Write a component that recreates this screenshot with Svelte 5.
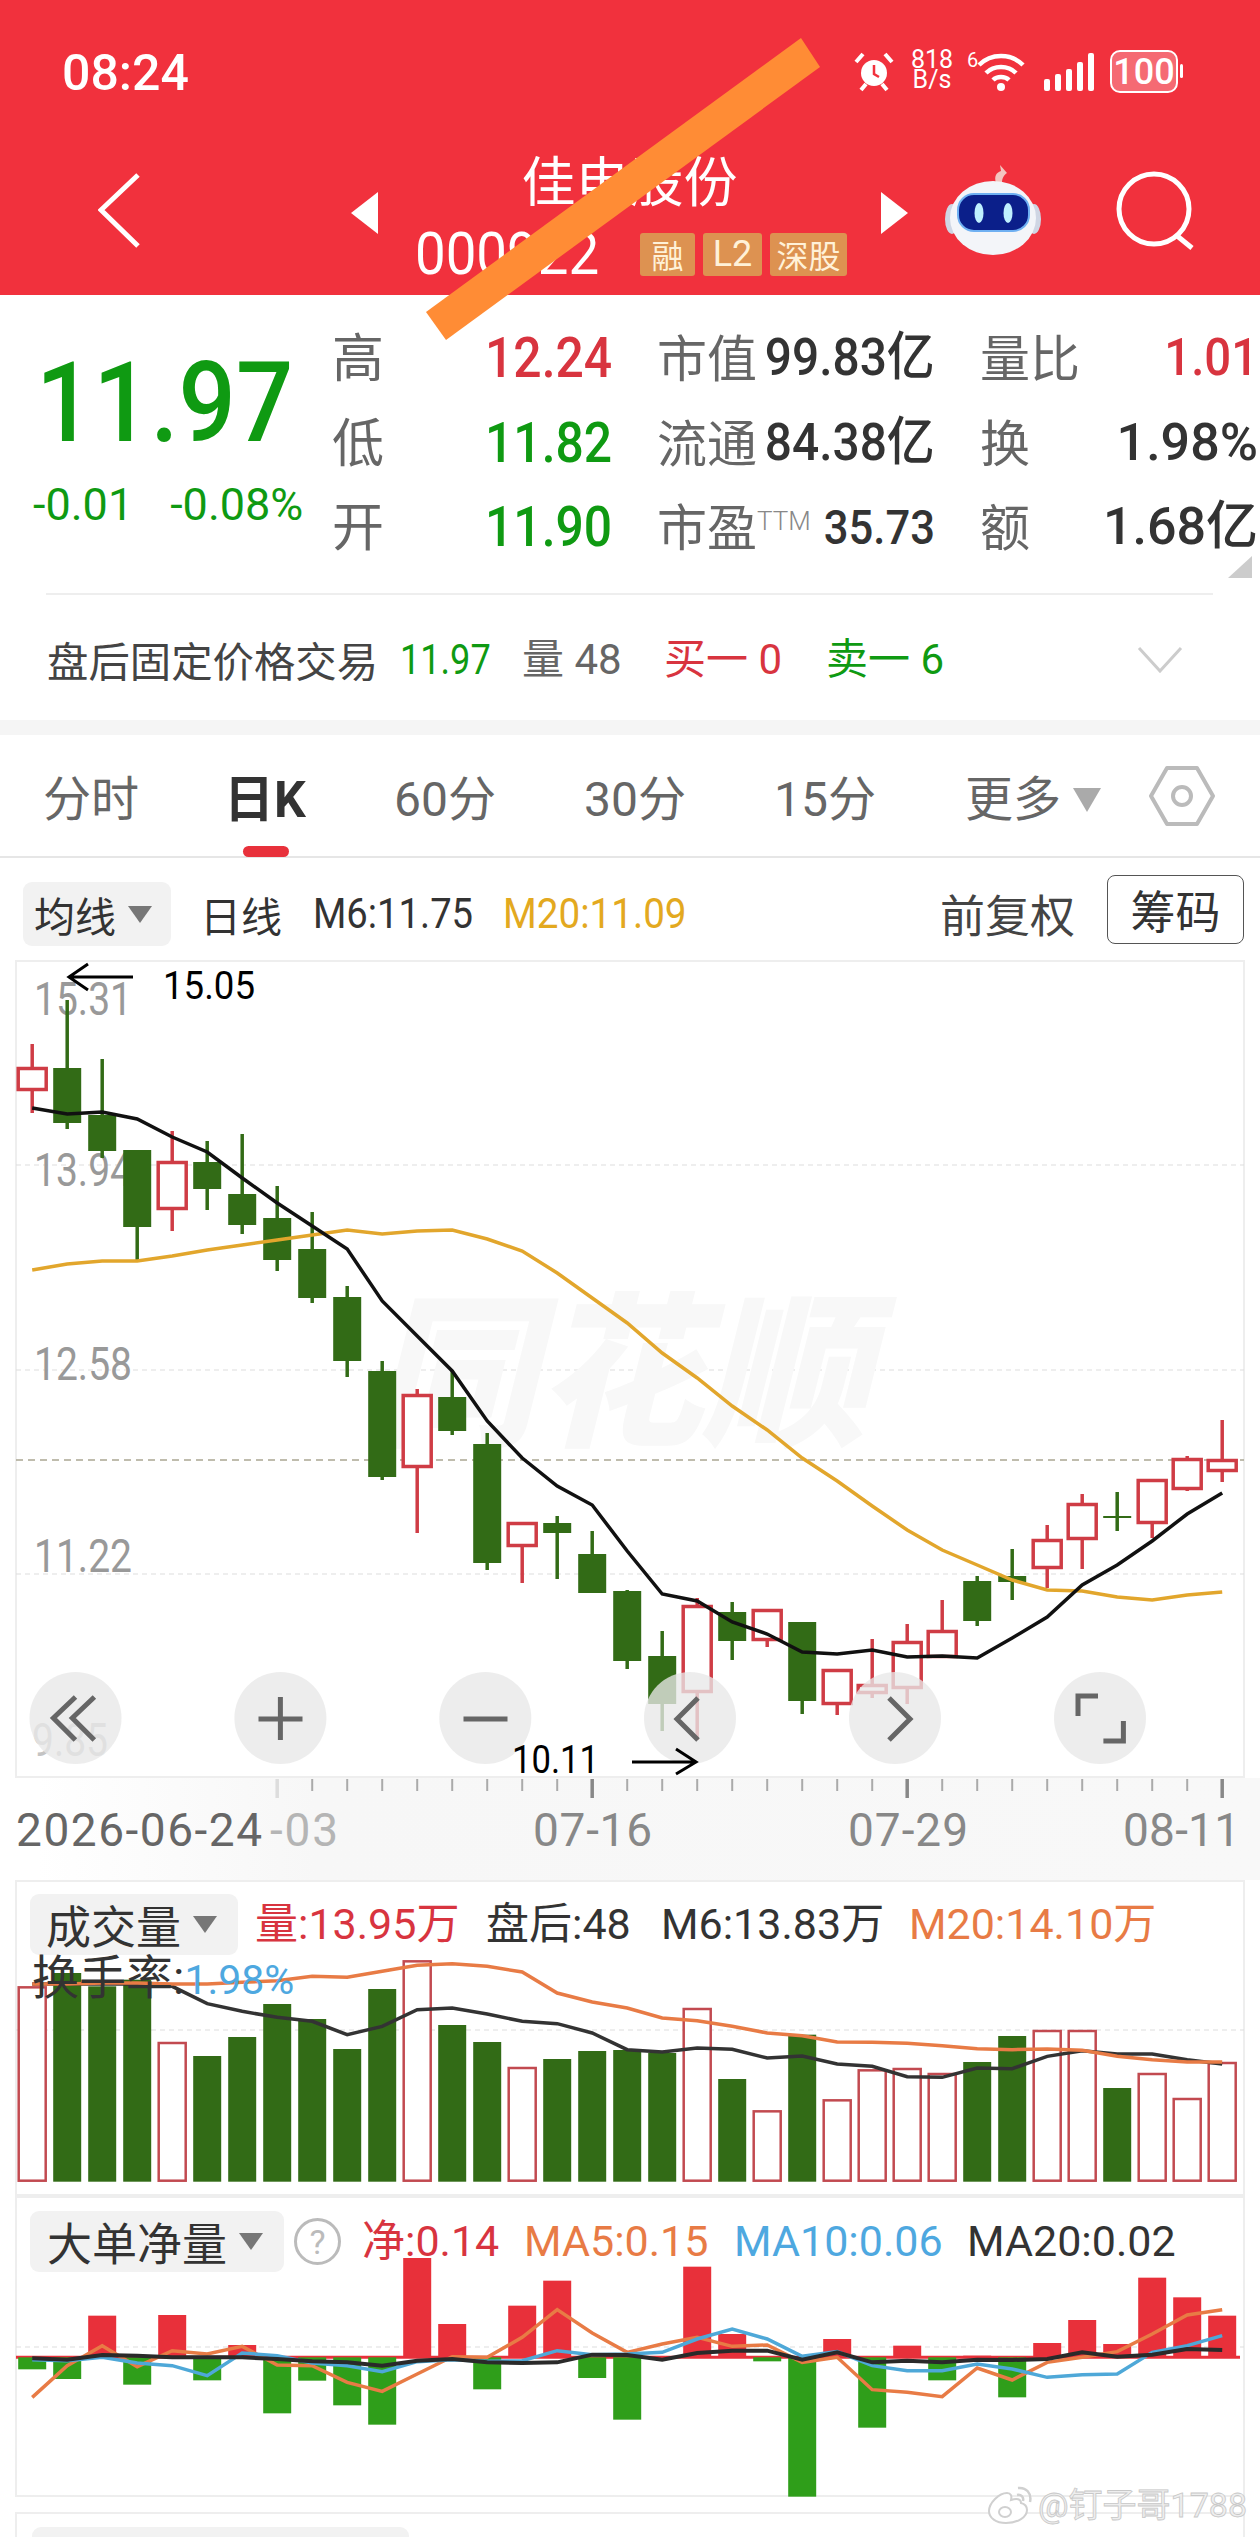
<script lang="ts">
	const xAt = (i: number) => 32.2 + 35 * i;

	// [rising, wickTop, bodyTop, bodyBottom, wickBottom]
	const candles: [boolean, number, number, number, number][] = [
		[true, 1046, 1069, 1093, 1115],
		[false, 1002, 1070, 1125, 1131],
		[false, 1061, 1117, 1153, 1160],
		[false, 1152, 1152, 1229, 1262],
		[true, 1133, 1163, 1212, 1233],
		[false, 1143, 1164, 1191, 1212],
		[false, 1136, 1196, 1227, 1236],
		[false, 1188, 1220, 1262, 1273],
		[false, 1214, 1251, 1300, 1305],
		[false, 1288, 1299, 1363, 1379],
		[false, 1363, 1373, 1479, 1482],
		[true, 1391, 1396, 1470, 1535],
		[false, 1372, 1399, 1433, 1437],
		[false, 1435, 1446, 1565, 1572],
		[true, 1524, 1524, 1549, 1585],
		[false, 1518, 1525, 1535, 1581],
		[false, 1533, 1556, 1595, 1595],
		[false, 1592, 1593, 1663, 1671],
		[false, 1633, 1658, 1706, 1733],
		[true, 1600, 1607, 1695, 1742],
		[false, 1604, 1614, 1643, 1662],
		[true, 1611, 1611, 1643, 1649],
		[false, 1624, 1624, 1703, 1716],
		[true, 1671, 1671, 1707, 1717],
		[true, 1641, 1686, 1696, 1700],
		[true, 1626, 1643, 1691, 1706],
		[true, 1602, 1632, 1660, 1660],
		[false, 1578, 1583, 1623, 1628],
		[false, 1551, 1578, 1584, 1602],
		[true, 1527, 1541, 1571, 1590],
		[true, 1496, 1505, 1542, 1571],
		[false, 1494, 1518, 1520, 1533],
		[true, 1481, 1481, 1526, 1540],
		[true, 1458, 1460, 1492, 1493],
		[true, 1422, 1461, 1474, 1484]
	];
	const ma6 = [
		1110, 1116, 1114, 1121, 1139, 1154, 1180, 1205, 1228, 1251, 1303, 1338, 1373, 1423, 1460, 1488,
		1507, 1553, 1596, 1603, 1624, 1636, 1654, 1656, 1652, 1659, 1658, 1660, 1640, 1619, 1587, 1567,
		1543, 1516, 1495
	];
	const ma20 = [
		1272, 1266, 1263, 1263, 1258, 1252, 1247, 1242, 1237, 1232, 1236, 1233, 1232, 1241, 1253, 1275,
		1300, 1325, 1355, 1380, 1408, 1432, 1460, 1483, 1508, 1532, 1552, 1567, 1582, 1592, 1593, 1599,
		1602, 1597, 1594
	];
	const priceLabels = [
		{ text: '15.31', y: 1017 },
		{ text: '13.94', y: 1188 },
		{ text: '12.58', y: 1381.5 },
		{ text: '11.22', y: 1574 }
	];
	const grid = [1167, 1372, 1576];

	// volume panel, bar tops in page px
	const volTop = (z: number) => 1860 + z / 3;
	const volume: [boolean, number][] = (
		[
			[true, 388], [false, 345], [false, 385], [false, 365], [true, 555], [false, 594], [false, 537],
			[false, 438], [false, 483], [false, 573], [false, 393], [true, 310], [false, 501], [false, 552],
			[true, 630], [false, 603], [false, 579], [false, 576], [false, 585], [true, 453], [false, 663],
			[true, 760], [false, 530], [true, 727], [true, 637], [true, 633], [true, 648], [false, 612],
			[false, 534], [true, 519], [true, 519], [false, 690], [true, 648], [true, 723], [true, 615]
		] as [boolean, number][]
	).map(([up, z]) => [up, volTop(z)]);
	const volBase = 2182.7;
	const volM20 = [
		378, 378, 375, 375, 378, 378, 373, 368, 355, 358, 340, 322, 317, 325, 342, 405, 432, 450, 480, 488,
		505, 525, 533, 552, 553, 556, 563, 572, 575, 573, 577, 595, 605, 612, 612
	].map(volTop);
	const volM6 = [
		378, 378, 378, 378, 385, 437, 460, 478, 490, 530, 505, 455, 450, 468, 490, 497, 525, 575, 582, 570,
		574, 600, 594, 618, 625, 656, 658, 630, 632, 595, 578, 588, 588, 605, 618
	].map(volTop);

	// net flow panel, z values read against a zero line at 505
	const netY = (z: number) => 2190 + z / 3;
	const netZero = 505;
	const net = [
		541, 570, 380, 587, 378, 574, 468, 673, 575, 649, 707, 207, 405, 601, 350, 275, 567, 692, 505, 233,
		435, 517, 923, 450, 716, 470, 574, 500, 625, 462, 393, 465, 266, 325, 380
	];
	const netMa5 = [
		625, 530, 470, 533, 485, 495, 472, 528, 530, 580, 607, 555, 503, 505, 445, 362, 432, 490, 465, 445,
		472, 468, 520, 505, 602, 610, 623, 537, 573, 520, 505, 488, 435, 378, 362
	];
	const netMa10 = [
		512, 515, 505, 522, 530, 560, 492, 500, 522, 530, 548, 518, 512, 517, 515, 485, 497, 495, 490, 450,
		420, 450, 502, 488, 530, 545, 545, 525, 540, 565, 557, 555, 490, 470, 440
	];
	const netMa20 = [
		508, 512, 498, 500, 505, 505, 505, 510, 517, 520, 530, 515, 510, 520, 522, 520, 497, 498, 512, 492,
		485, 485, 512, 490, 520, 515, 520, 512, 513, 510, 490, 503, 497, 480, 483
	];

	const line = (ys: number[]) => ys.map((y, i) => `${xAt(i)},${y}`).join(' ');
	const indices = candles.map((_, i) => i);
</script>

<div class="page">
	<header class="top">
		<div class="status">
			<span class="time">08:24</span>
			<div class="status-icons">
				<svg class="alarm" viewBox="0 0 40 40" aria-hidden="true">
					<circle cx="20" cy="21" r="13" fill="#fff" />
					<path d="M20 13v9l5 3" fill="none" stroke="#f1313d" stroke-width="2.5" />
					<path d="M2 10 9 2M38 10 31 2M7 38l5-6M33 38l-5-6" stroke="#fff" stroke-width="4" fill="none" />
				</svg>
				<span class="speed">818<br />B/s</span>
				<svg class="wifi" viewBox="0 0 58 40" aria-hidden="true">
					<text x="0" y="15" class="wifi-six">6</text>
					<path d="M12 13C24 1 44 1 56 13M19 21c8-8 22-8 30 0M26 28c4-4 12-4 16 0" fill="none" stroke="#fff" stroke-width="4.5" />
					<circle cx="34" cy="35" r="4" fill="#fff" />
				</svg>
				<svg class="signal" viewBox="0 0 51 38" aria-hidden="true">
					<rect x="0" y="26" width="6" height="12" rx="2" fill="#fff" />
					<rect x="11" y="21" width="6" height="17" rx="2" fill="#fff" />
					<rect x="22" y="16" width="6" height="22" rx="2" fill="#fff" />
					<rect x="33" y="9" width="6" height="29" rx="2" fill="#fff" />
					<rect x="44" y="0" width="6" height="38" rx="2" fill="#fff" />
				</svg>
				<div class="battery"><span>100</span></div>
			</div>
		</div>
		<div class="nav">
			<svg class="back" viewBox="0 0 42 75" aria-hidden="true">
				<path d="M40 2 3 37l37 36" fill="none" stroke="#fff" stroke-width="5" />
			</svg>
			<div class="tri tri-left"></div>
			<div class="stock">
				<div class="stock-name">佳电股份</div>
				<div class="stock-code">
					<span class="code"><span class="sq sq-91">000922</span></span>
					<span class="tag">融</span>
					<span class="tag tag-l2">L2</span>
					<span class="tag tag-wide">深股</span>
				</div>
			</div>
			<div class="tri tri-right"></div>
			<svg class="robot" viewBox="0 0 98 92" aria-hidden="true">
				<path d="M52 20c-2-7 0-10 5-12l-1-6 7 8c-3 2-5 5-5 10z" fill="#f3c6c0" />
				<ellipse cx="8" cy="56" rx="7" ry="15" fill="#cfd6e4" />
				<ellipse cx="90" cy="56" rx="7" ry="15" fill="#cfd6e4" />
				<ellipse cx="49" cy="55" rx="43" ry="37" fill="#f3f5f9" />
				<rect x="14" y="31" width="71" height="37" rx="16" fill="#0b1f8a" stroke="#6fb0f2" stroke-width="2" />
				<ellipse cx="35" cy="50" rx="4.5" ry="10" fill="#bff0ff" />
				<ellipse cx="64" cy="50" rx="4.5" ry="10" fill="#bff0ff" />
			</svg>
			<svg class="search" viewBox="0 0 78 80" aria-hidden="true">
				<circle cx="38" cy="38" r="35" fill="none" stroke="#fff" stroke-width="5" />
				<path d="M60 64l16 13" stroke="#fff" stroke-width="5" fill="none" />
			</svg>
		</div>
	</header>

	<section class="quote">
		<div class="last">
			<div class="last-price"><span class="sq sq-90">11.97</span></div>
			<div class="last-change"><span>-0.01</span><span>-0.08%</span></div>
		</div>
		<div class="stats">
			<span class="stat-key">高</span>
			<span class="stat-num red"><span class="sq sq-89">12.24</span></span>
			<div class="pair mid"><span class="pair-key">市值</span><span class="pair-val sq-r sq-92">99.83亿</span></div>
			<div class="pair end"><span class="pair-key">量比</span><span class="pair-val sq-r sq-91 red">1.01</span></div>

			<span class="stat-key">低</span>
			<span class="stat-num green"><span class="sq sq-89">11.82</span></span>
			<div class="pair mid"><span class="pair-key">流通</span><span class="pair-val sq-r sq-92">84.38亿</span></div>
			<div class="pair end"><span class="pair-key">换</span><span class="pair-val sq-r">1.98%</span></div>

			<span class="stat-key">开</span>
			<span class="stat-num green"><span class="sq sq-89">11.90</span></span>
			<div class="pair mid">
				<span class="pair-key">市盈<small>TTM</small></span><span class="pair-val pe sq-r sq-89">35.73</span>
			</div>
			<div class="pair end"><span class="pair-key">额</span><span class="pair-val sq-r">1.68亿</span></div>
		</div>
		<div class="corner"></div>
	</section>
	<div class="rule"></div>

	<div class="after">
		<span class="after-title">盘后固定价格交易</span>
		<span class="after-num green"><span class="sq sq-86">11.97</span></span>
		<span class="after-num muted">量 48</span>
		<span class="after-num red">买一 0</span>
		<span class="after-num green">卖一 6</span>
		<svg class="after-more" viewBox="0 0 46 27" aria-hidden="true">
			<path d="M2 2l21 23L44 2" fill="none" stroke="#ccc" stroke-width="3" />
		</svg>
	</div>
	<div class="band"></div>

	<nav class="tabs">
		<span>分时</span>
		<span class="active">日K</span>
		<span>60分</span>
		<span>30分</span>
		<span>15分</span>
		<span class="more">更多<i class="caret caret-lg"></i></span>
		<svg class="hex" viewBox="0 0 66 62" aria-hidden="true">
			<path d="M18 3h30l16 28-16 28H18L2 31z" fill="none" stroke="#bbb" stroke-width="4" stroke-linejoin="round" />
			<circle cx="33" cy="31" r="9" fill="none" stroke="#bbb" stroke-width="4" />
		</svg>
		<div class="pill"></div>
	</nav>

	<div class="controls">
		<button class="select select-ma">均线<i class="caret"></i></button>
		<span class="ctl-cjk">日线</span>
		<span class="ctl-num"><span class="sq sq-91">M6:11.75</span></span>
		<span class="ctl-num ctl-m20"><span class="sq sq-92">M20:11.09</span></span>
		<span class="ctl-adj">前复权</span>
		<button class="chips">筹码</button>
	</div>

	<div class="panel panel-price">
		<svg viewBox="15 962 1230 818" width="1230" height="818">
			<rect x="16" y="963" width="1228" height="816" class="frame" />
			{#each grid as y}
				<line x1="16" x2="1244" y1={y} y2={y} class="grid" />
			{/each}
			<line x1="16" x2="1244" y1="1462" y2="1462" class="grid-now" />
			<text x="370" y="1435" class="mark">同花顺</text>
			{#each priceLabels as l}
				<text x="34" y={l.y} class="axis-num" textLength="98" lengthAdjust="spacingAndGlyphs">{l.text}</text>
			{/each}
			<text x="32" y="1758" class="axis-num faded" textLength="76" lengthAdjust="spacingAndGlyphs">9.85</text>
			{#each candles as [up, wt, bt, bb, wb], i}
				<line x1={xAt(i)} x2={xAt(i)} y1={wt} y2={wb} class={up ? 'wick up' : 'wick down'} />
				{#if up}
					<rect x={xAt(i) - 14} y={bt + 1.5} width="28" height={bb - bt - 3} class="body-up" />
				{:else}
					<rect x={xAt(i) - 14} y={bt} width="28" height={Math.max(bb - bt, 2)} class="body-down" />
				{/if}
			{/each}
			<polyline points={line(ma20)} class="ma-yellow" />
			<polyline points={line(ma6)} class="ma-black" />

			{#each [75.5, 280.4, 485.3, 690, 895, 1100] as cx}
				<circle {cx} cy="1720" r="46" class="round" />
			{/each}
			<g class="round-icon">
				<path d="M75.5 1699 53.4 1720l22 22M94.4 1699 72.3 1720l22 22" />
				<path d="M280.4 1699v43M258.5 1721h44" />
				<path d="M463.5 1721h44" />
				<path d="M698 1700l-21 21 21 21" />
				<path d="M889 1700l21 21-21 21" />
				<path d="M1078 1718v-20h20M1123.4 1723v20h-20" />
			</g>

			<path d="M133 979H69m19-13-19 13 19 13" class="note" />
			<text x="163" y="1001" class="note-text" textLength="92" lengthAdjust="spacingAndGlyphs">15.05</text>
			<text x="512" y="1775" class="note-text" textLength="87" lengthAdjust="spacingAndGlyphs">10.11</text>
			<path d="M632 1764h64m-20-13 20 13-20 12" class="note" />
		</svg>
	</div>

	<div class="axis">
		<svg viewBox="15 1780 1230 102" width="1230" height="102">
			{#each indices.slice(8) as i}
				{#if i !== 16 && i !== 25 && i !== 34}
					<line x1={xAt(i)} x2={xAt(i)} y1="1781" y2="1793" class="tick" />
				{/if}
			{/each}
			<line x1={xAt(7)} x2={xAt(7)} y1="1781" y2="1800" class="tick-big tick-light" />
			<line x1={xAt(16)} x2={xAt(16)} y1="1781" y2="1800" class="tick-big" />
			<line x1={xAt(25)} x2={xAt(25)} y1="1781" y2="1800" class="tick-big" />
			<line x1={xAt(34)} x2={xAt(34)} y1="1781" y2="1800" class="tick-big" />
			<text x="16" y="1848" class="date date-dark" textLength="246">2026-06-24</text>
			<text x="270" y="1848" class="date date-light" textLength="68">-03</text>
			<text x="533" y="1848" class="date" textLength="119">07-16</text>
			<text x="848" y="1848" class="date" textLength="120">07-29</text>
			<text x="1123" y="1848" class="date" textLength="117">08-11</text>
		</svg>
	</div>

	<div class="panel panel-vol">
		<svg viewBox="15 1882 1230 316" width="1230" height="316">
			<rect x="16" y="1883" width="1228" height="314" class="frame" />
			<line x1="16" x2="1244" y1="2032" y2="2032" class="grid" />
			{#each volume as [up, top], i}
				{#if up}
					<rect x={xAt(i) - 13.5} y={top} width="27" height={volBase - top} class="vol-up" />
				{:else}
					<rect x={xAt(i) - 14} y={top} width="28" height={volBase - top + 1} class="body-down" />
				{/if}
			{/each}
			<polyline points={line(volM6)} class="vol-m6" />
			<polyline points={line(volM20)} class="vol-m20" />
		</svg>
		<div class="legend legend-vol">
			<button class="select select-vol">成交量<i class="caret"></i></button>
			<span class="red">量:13.95万</span>
			<span class="dark">盘后:48</span>
			<span class="dark">M6:13.83万</span>
			<span class="orange">M20:14.10万</span>
		</div>
		<div class="turnover">换手率:<span class="blue">1.98%</span></div>
	</div>

	<div class="panel panel-net">
		<svg viewBox="15 2197 1230 301" width="1230" height="301">
			<rect x="16" y="2198" width="1228" height="299" class="frame" />
			<line x1="16" x2="1244" y1="2348" y2="2348" class="grid" />
			<line x1="16" x2="1240" y1={netY(netZero)} y2={netY(netZero)} class="net-zero" />
			{#each net as z, i}
				{#if z < netZero}
					<rect x={xAt(i) - 14} y={netY(z)} width="28" height={netY(netZero) - netY(z)} class="net-up" />
				{:else if z > netZero}
					<rect x={xAt(i) - 14} y={netY(netZero)} width="28" height={netY(z) - netY(netZero)} class="net-down" />
				{/if}
			{/each}
			<polyline points={line(netMa5.map(netY))} class="net-ma5" />
			<polyline points={line(netMa10.map(netY))} class="net-ma10" />
			<polyline points={line(netMa20.map(netY))} class="net-ma20" />
		</svg>
		<div class="legend legend-net">
			<button class="select select-net">大单净量<i class="caret"></i></button>
			<span class="help">?</span>
			<span class="red">净:0.14</span>
			<span class="orange">MA5:0.15</span>
			<span class="blue">MA10:0.06</span>
			<span class="dark">MA20:0.02</span>
		</div>
	</div>

	<div class="panel-next"><div class="next-select"></div></div>

	<!-- editing marks and the repost credit sit on top of the screenshot -->
	<svg class="slash" viewBox="0 0 1260 360" aria-hidden="true">
		<polygon points="801,38 820,67 446,340 426,312" fill="#ff8c35" />
	</svg>
	<div class="credit">
		<svg viewBox="0 0 44 38" width="44" height="38" aria-hidden="true">
			<path d="M18 37C8 37 1 32 1 25 1 17 11 7 19 7c4 0 5 3 4 7 6-2 10-1 10 3 4 1 6 3 6 7 0 7-9 13-21 13z" fill="#fff" stroke="#d0d0d0" stroke-width="2" />
			<ellipse cx="17" cy="26" rx="6" ry="5" fill="none" stroke="#d0d0d0" stroke-width="2" />
			<path d="M29 9c4-1 7 2 6 6M30 2c8-1 14 5 12 14" fill="none" stroke="#d0d0d0" stroke-width="2.5" />
		</svg>
		<span>@钉子哥1788</span>
	</div>
</div>

<style>
	:global(body) {
		margin: 0;
		background: #fff;
	}

	.page {
		--num: Roboto, 'Noto Sans CJK SC', sans-serif;
		--cjk: 'Noto Sans CJK SC', sans-serif;
		position: relative;
		width: 1260px;
		height: 2537px;
		overflow: hidden;
		background: #fff;
		font-family: var(--cjk);
		color: #333;
	}

	.red {
		color: #d8343f;
	}
	.green {
		color: #0f9a12;
	}
	.orange {
		color: #e87b45;
	}
	.blue {
		color: #4ea8e0;
	}
	.dark {
		color: #333;
	}
	.muted {
		color: #666;
	}

	/* the app's number font is narrower than anything installed */
	.sq {
		display: inline-block;
		white-space: nowrap;
		transform-origin: left center;
	}
	.sq-r {
		display: inline-block;
		white-space: nowrap;
		transform-origin: right center;
	}
	.sq-86 {
		transform: scaleX(0.86);
	}
	.sq-89 {
		transform: scaleX(0.89);
	}
	.sq-90 {
		transform: scaleX(0.9);
	}
	.sq-91 {
		transform: scaleX(0.91);
	}
	.sq-92 {
		transform: scaleX(0.92);
	}

	/* header */
	.top {
		height: 295px;
		background: #f1313d;
		color: #fff;
	}

	.status {
		display: flex;
		justify-content: space-between;
		height: 130px;
		padding: 50px 82px 0 62px;
		box-sizing: border-box;
	}

	.time {
		font: 500 50px/46px var(--num);
	}

	.status-icons {
		display: flex;
		align-items: flex-start;
	}

	.alarm {
		width: 40px;
		height: 40px;
		margin-top: 2px;
	}

	.speed {
		width: 46px;
		margin-left: 15px;
		font: 25px/20px var(--num);
		text-align: center;
	}

	.wifi {
		width: 58px;
		height: 40px;
		margin: 2px 0 0 12px;
	}

	.wifi-six {
		font: 20px var(--num);
		fill: #fff;
	}

	.signal {
		width: 51px;
		height: 38px;
		margin: 3px 0 0 19px;
	}

	.battery {
		position: relative;
		display: flex;
		align-items: center;
		justify-content: center;
		width: 68px;
		height: 43px;
		margin: 0 0 0 15px;
		border: 2.5px solid #fff;
		border-radius: 10px;
		box-sizing: border-box;
		background: rgba(255, 255, 255, 0.28);
		font: 500 36px/1 var(--num);
	}

	.battery::after {
		content: '';
		position: absolute;
		right: -7px;
		top: 12px;
		width: 3px;
		height: 14px;
		border-radius: 2px;
		background: #fff;
	}

	.nav {
		display: flex;
		align-items: flex-start;
		height: 165px;
		padding-left: 98px;
	}

	.back {
		width: 42px;
		height: 75px;
		margin-top: 43px;
	}

	.tri {
		width: 0;
		height: 0;
		margin-top: 62px;
		border-top: 21px solid transparent;
		border-bottom: 21px solid transparent;
	}

	.tri-left {
		margin-left: 211px;
		border-right: 27px solid #fff;
	}

	.tri-right {
		border-left: 27px solid #fff;
	}

	.stock {
		width: 503px;
		padding-top: 20px;
	}

	.stock-name {
		font-size: 54px;
		line-height: 58px;
		text-align: center;
	}

	.stock-code {
		display: flex;
		align-items: center;
		height: 44px;
		margin-top: 24px;
		padding-left: 37px;
	}

	.code {
		width: 188px;
		font: 60px/44px var(--num);
	}

	.tag {
		display: flex;
		align-items: center;
		justify-content: center;
		width: 55px;
		height: 43px;
		margin-right: 8px;
		border-radius: 3px;
		background: #dd9251;
		color: #fff1d8;
		font: 32px/1 var(--cjk);
	}

	.code + .tag {
		margin-left: 37px;
	}

	.tag-l2 {
		width: 59px;
		font-family: var(--num);
		font-size: 36px;
	}

	.tag-wide {
		width: 77px;
	}

	.robot {
		width: 98px;
		height: 92px;
		margin: 33px 0 0 36px;
	}

	.search {
		width: 78px;
		height: 80px;
		margin: 41px 0 0 74px;
	}

	/* quote */
	.quote {
		position: relative;
		display: flex;
		height: 298px;
	}

	.last {
		width: 332px;
		flex: none;
	}

	.last-price {
		margin: 58px 0 0 36px;
		font: 500 112px/100px var(--num);
		color: #0f9a12;
	}

	.last-change {
		display: flex;
		gap: 37px;
		margin: 31px 0 0 33px;
		font: 45px/42px var(--num);
		color: #0f9a12;
	}

	.stats {
		display: grid;
		grid-template-columns: 153px 125px 327px 321px;
		grid-auto-rows: 84.5px;
		align-items: center;
		flex: none;
		margin-top: 21px;
		height: 254px;
	}

	.stat-key {
		margin-top: -6px;
		font-size: 52px;
		line-height: 1;
		color: #666;
	}

	.stat-num {
		font: 500 56px/1 var(--num);
	}

	.pair {
		display: flex;
		align-items: center;
		justify-content: space-between;
	}

	.mid {
		padding-left: 47px;
		width: 278px;
	}

	.end {
		padding-left: 43px;
		width: 278px;
	}

	.pair-key {
		flex: none;
		margin-top: -6px;
		font-size: 50px;
		line-height: 1;
		white-space: nowrap;
		color: #666;
	}

	.pair-key small {
		font: 300 26px var(--num);
		vertical-align: 16px;
		color: #888;
	}

	.pair-val {
		flex: none;
		margin-left: -12px;
		font: 500 52px/1 var(--num);
		color: #333;
	}

	.pair-val.red {
		color: #d8343f;
	}

	.pe {
		font-size: 49px;
	}

	.corner {
		position: absolute;
		left: 1228px;
		top: 261px;
		width: 24px;
		height: 22px;
		background: #ccc;
		clip-path: polygon(100% 0, 100% 100%, 0 100%);
	}

	.rule {
		height: 2px;
		margin: 0 47px 0 46px;
		background: #eee;
	}

	/* after hours row */
	.after {
		display: grid;
		grid-template-columns: 353px 122px 142px 162px 311px auto;
		align-items: center;
		height: 124.5px;
		padding: 5px 0 0 47px;
		box-sizing: border-box;
	}

	.after-title {
		color: #444;
		font-size: 41.4px;
		line-height: 1;
	}

	.after-num {
		font: 42px/1 var(--num);
	}

	.after-more {
		width: 46px;
		height: 27px;
	}

	.band {
		height: 15.5px;
		background: #f5f5f5;
	}

	/* period tabs */
	.tabs {
		position: relative;
		display: grid;
		grid-template-columns: 181px 170px 190px 190px 191px 184px auto;
		align-items: center;
		height: 123px;
		padding: 8px 0 0 43px;
		box-sizing: border-box;
		border-bottom: 2px solid #e6e6e6;
		font: 48px/1 var(--num);
		color: #666;
	}

	.tabs .active {
		font-weight: 700;
		font-size: 50px;
		color: #333;
	}

	.more {
		display: flex;
		align-items: center;
	}

	.caret {
		display: inline-block;
		width: 0;
		height: 0;
		margin-left: 12px;
		border-left: 12px solid transparent;
		border-right: 12px solid transparent;
		border-top: 17px solid #777;
	}

	.caret-lg {
		border-left-width: 14px;
		border-right-width: 14px;
		border-top: 24px solid #aaa;
	}

	.hex {
		width: 66px;
		height: 62px;
		margin-top: -8px;
	}

	.pill {
		position: absolute;
		left: 243px;
		top: 111px;
		width: 46px;
		height: 11px;
		border-radius: 6px;
		background: #e8313b;
	}

	/* chart controls */
	.controls {
		display: grid;
		grid-template-columns: 177px 113px 190px 437px 167px 137px;
		align-items: start;
		height: 102px;
		padding: 24px 0 0 23px;
		box-sizing: border-box;
		line-height: 64px;
		white-space: nowrap;
	}

	.select {
		display: flex;
		align-items: center;
		padding: 0;
		border: 0;
		border-radius: 9px;
		background: #f2f2f2;
		color: #333;
		font: 41px/1 var(--cjk);
	}

	.select-ma {
		width: 148px;
		height: 64px;
		padding-left: 11px;
	}

	.ctl-cjk {
		font-size: 41px;
		color: #333;
	}

	.ctl-num {
		font-family: var(--num);
		font-size: 42px;
		color: #333;
	}

	.ctl-m20 {
		color: #e3a91f;
	}

	.ctl-adj {
		font-size: 45px;
		color: #444;
	}

	.chips {
		width: 137px;
		height: 69px;
		margin-top: -7px;
		padding: 0;
		border: 1.5px solid #555;
		border-radius: 8px;
		background: #fff;
		color: #333;
		font: 45px/1 var(--cjk);
	}

	/* chart panels */
	.panel {
		position: relative;
		width: 1230px;
		margin-left: 15px;
	}

	.panel svg,
	.axis svg {
		display: block;
	}

	.panel-price {
		height: 818px;
	}

	.panel-vol {
		height: 316px;
	}

	.panel-net {
		height: 301px;
	}

	.frame {
		fill: none;
		stroke: #eee;
		stroke-width: 2;
	}

	.grid {
		stroke: #ddd;
		stroke-width: 1;
		stroke-dasharray: 5 4;
	}

	.grid-now {
		stroke: #aaa792;
		stroke-width: 1.5;
		stroke-dasharray: 7 5;
	}

	.mark {
		font: italic 900 166px var(--cjk);
		fill: #f8f8f8;
	}

	.axis-num {
		font: 47px var(--num);
		fill: #999;
	}

	.faded {
		fill: #c4c4c4;
	}

	.wick {
		stroke-width: 3.5;
	}

	.up {
		stroke: #cf3c45;
	}

	.down {
		stroke: #326b16;
	}

	.body-up {
		fill: #fff;
		stroke: #cf3c45;
		stroke-width: 3.5;
	}

	.body-down {
		fill: #326b16;
	}

	.ma-yellow {
		fill: none;
		stroke: #e2a62c;
		stroke-width: 3.5;
	}

	.ma-black {
		fill: none;
		stroke: #111;
		stroke-width: 3.5;
	}

	.round {
		fill: rgba(232, 232, 232, 0.78);
	}

	.round-icon path {
		fill: none;
		stroke: #666;
		stroke-width: 5;
	}

	.note {
		fill: none;
		stroke: #000;
		stroke-width: 3;
	}

	.note-text {
		font: 39px var(--num);
		fill: #000;
	}

	.axis {
		height: 102px;
		background: linear-gradient(to right, #fff 3%, #f7f7f7 25%, #f8f8f8);
	}

	.axis svg {
		margin-left: 15px;
	}

	.tick {
		stroke: #aaa;
		stroke-width: 2;
	}

	.tick-big {
		stroke: #888;
		stroke-width: 3.5;
	}

	.tick-light {
		stroke: #ddd;
	}

	.date {
		font: 46px var(--num);
		fill: #888;
	}

	.date-dark {
		fill: #666;
	}

	.date-light {
		fill: #b5b5b5;
	}

	.vol-up {
		fill: #fff;
		stroke: #c24a50;
		stroke-width: 2.5;
	}

	.vol-m6 {
		fill: none;
		stroke: #333;
		stroke-width: 3.5;
	}

	.vol-m20 {
		fill: none;
		stroke: #e87b45;
		stroke-width: 3.5;
	}

	/* legends lie over the top of their charts */
	.legend {
		position: absolute;
		display: grid;
		align-items: center;
		left: 15px;
		font: 43px/1 var(--num);
		white-space: nowrap;
	}

	.legend-vol {
		grid-template-columns: 225px 231px 175px 248px auto;
		top: 14px;
		height: 61px;
	}

	.select-vol {
		width: 208px;
		height: 61px;
		padding-left: 16px;
		font-size: 45px;
	}

	.turnover {
		position: absolute;
		left: 17px;
		top: 72px;
		font: 47px/1.1 var(--num);
		color: #333;
	}

	.turnover .blue {
		font-size: 41px;
	}

	.legend-net {
		grid-template-columns: 264px 68px 162px 210px 233px auto;
		top: 15px;
		height: 61px;
	}

	.select-net {
		width: 254px;
		height: 61px;
		padding-left: 17px;
		font-size: 45px;
	}

	.help {
		display: flex;
		align-items: center;
		justify-content: center;
		width: 41px;
		height: 41px;
		border: 3px solid #bbb;
		border-radius: 50%;
		color: #bbb;
		font: 34px/1 var(--num);
	}

	.net-zero {
		stroke: #e8303a;
		stroke-width: 3;
	}

	.net-up {
		fill: #e8303a;
	}

	.net-down {
		fill: #2f9e1a;
	}

	.net-ma5 {
		fill: none;
		stroke: #e87b45;
		stroke-width: 3.5;
	}

	.net-ma10 {
		fill: none;
		stroke: #4ea8d8;
		stroke-width: 3.5;
	}

	.net-ma20 {
		fill: none;
		stroke: #2a2a2a;
		stroke-width: 4;
	}

	.panel-next {
		height: 39px;
		margin: 15px 0 0 15px;
		width: 1230px;
		padding-left: 15px;
		box-sizing: border-box;
		border-top: 2px solid #eee;
		border-left: 2px solid #eee;
		border-right: 2px solid #eee;
	}

	.next-select {
		width: 377px;
		height: 30px;
		margin-top: 13px;
		border-radius: 9px 9px 0 0;
		background: #f2f2f2;
	}

	.slash {
		position: absolute;
		left: 0;
		top: 0;
		width: 1260px;
		height: 360px;
		pointer-events: none;
	}

	.credit {
		position: absolute;
		right: 13px;
		top: 2486px;
		display: flex;
		align-items: center;
		gap: 6px;
		font: 34px/1 var(--num);
		color: #eee;
		-webkit-text-stroke: 0.8px #c8c8c8;
	}
</style>
